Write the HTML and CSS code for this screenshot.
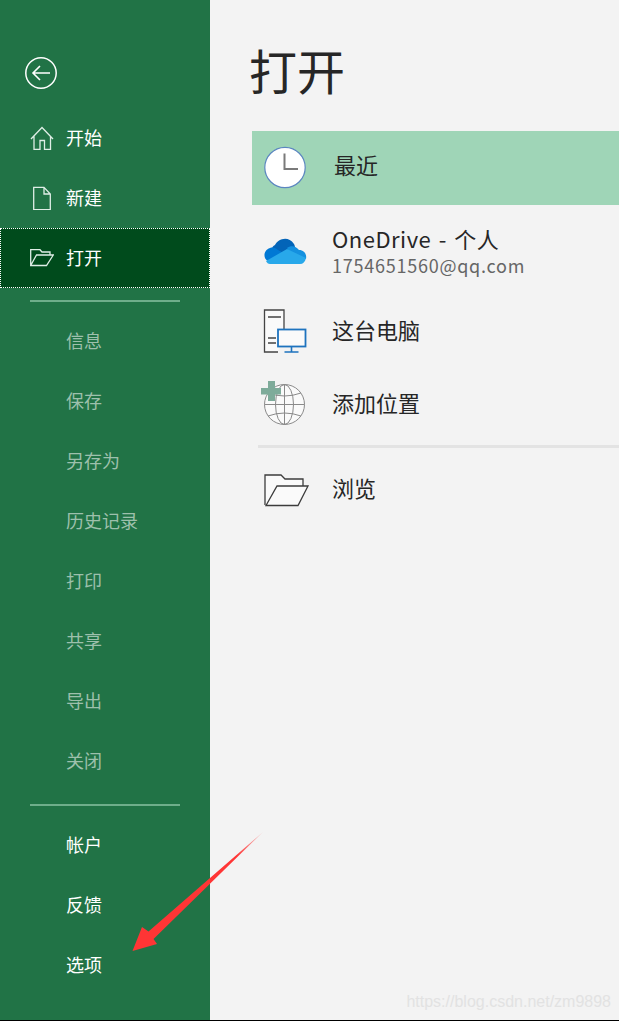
FILE: index.html
```html
<!DOCTYPE html>
<html lang="zh-CN">
<head>
  <meta charset="UTF-8">
  <title>打开</title>
  <link rel="stylesheet" href="styles.css">
</head>
<body>
  <div class="app">
    <nav class="sidebar">
      <div class="back">
        <svg width="34" height="34" viewBox="0 0 34 34" fill="none" stroke="#fff">
          <circle cx="16" cy="16" r="15.2" stroke-width="1.5"/>
          <path d="M8 16H25M15 9L8 16L15 23" stroke-width="1.6"/>
        </svg>
      </div>
      <a class="nav-item">
        <svg class="nav-icon" width="24" height="24" viewBox="0 0 24 24" fill="none" stroke="#dfeee6" stroke-width="1.3">
          <path d="M1 13L12 1.5L23 13M4 10V23.5H10V14.5H14.5V23.5H20.5V10"/>
        </svg>
        开始
      </a>
      <a class="nav-item">
        <svg class="nav-icon" width="24" height="24" viewBox="0 0 24 24" fill="none" stroke="#dfeee6" stroke-width="1.3">
          <path d="M3.7 1.3H14L20.3 8V23.7H3.7ZM14 1.3V8H20.3"/>
        </svg>
        新建
      </a>
      <a class="nav-item active">
        <svg class="nav-icon" width="24" height="24" viewBox="0 0 24 24" fill="none" stroke="#dfeee6" stroke-width="1.3">
          <path d="M0.7 19.5V3.7H10L12 6H20V9M0.7 19.5H16.5L23.3 9H6.5L0.7 19.5Z"/>
        </svg>
        打开
      </a>
      <div class="nav-sep"></div>
      <a class="nav-item dim">信息</a>
      <a class="nav-item dim">保存</a>
      <a class="nav-item dim">另存为</a>
      <a class="nav-item dim">历史记录</a>
      <a class="nav-item dim">打印</a>
      <a class="nav-item dim">共享</a>
      <a class="nav-item dim">导出</a>
      <a class="nav-item dim">关闭</a>
      <div class="nav-sep lower"></div>
      <a class="nav-item">帐户</a>
      <a class="nav-item">反馈</a>
      <a class="nav-item">选项</a>
    </nav>

    <main class="content">
      <h1>打开</h1>
      <div class="place selected">
        <svg class="place-icon" width="44" height="44" viewBox="0 0 44 44">
          <circle cx="22" cy="21.5" r="20.2" fill="#fff" stroke="#5b86c0" stroke-width="1.2"/>
          <path d="M21.5 7.500V23H35" fill="none" stroke="#7a7a7a" stroke-width="2"/>
        </svg>
        <span class="place-name">最近</span>
      </div>
      <div class="place onedrive">
        <svg class="place-icon" width="44" height="44" viewBox="0 0 44 44">
          <path d="M12 17C15 11 25 7 31 16C32 18 32 19 32 21L17 29L9 21C9 19 10 18 12 17Z" fill="#0364b8"/>
          <path d="M5 33C0 31 0 22 7 20C10 19 13 20 15 22L24 27L10 36Z" fill="#0078d4"/>
          <path d="M24 20C28 17 33 18 36 22C41 22 44 26 43 31L30 30Z" fill="#1490df"/>
          <path d="M7 36C5 36 4 35 3 33L24 21L43 30C42 34 40 36 37 36Z" fill="#28a8ea"/>
        </svg>
        <div>
          <div class="place-name drive-name">OneDrive - 个人</div>
          <div class="place-sub">1754651560@qq.com</div>
        </div>
      </div>
      <div class="place computer">
        <svg class="place-icon" width="44" height="44" viewBox="0 0 44 44" fill="none">
          <path d="M15 43H1.500V1H21V20" stroke="#444" stroke-width="1.300" fill="#fafafa"/>
          <path d="M5 8H18M5 29H13M5 34H13" stroke="#444" stroke-width="1.300"/>
          <rect x="15" y="20.500" width="27.500" height="17" fill="#fafafa" stroke="#1e73be" stroke-width="1.800"/>
          <path d="M28.500 37.500V43M21.500 43H35.500" stroke="#1e73be" stroke-width="1.600"/>
        </svg>
        <span class="place-name">这台电脑</span>
      </div>
      <div class="place add">
        <svg class="place-icon globe" width="46" height="47" viewBox="0 0 46 47" fill="none" stroke="#8a8a8a" stroke-width="1">
          <circle cx="24.500" cy="25.500" r="20" fill="#fafafa"/>
          <ellipse cx="24.500" cy="25.500" rx="9" ry="20"/>
          <path d="M24.500 5.500V45.500M4.500 25.500H44.500M8 14Q24.500 20 41 14M8 37Q24.500 31 41 37"/>
          <path d="M8 2H15V9H21V15.500H15V22H8V15.500H1V9H8Z" fill="#7eab9a" stroke="none"/>
        </svg>
        <span class="place-name">添加位置</span>
      </div>
      <div class="place-sep"></div>
      <div class="place browse">
        <svg class="place-icon" width="46" height="34" viewBox="0 0 46 34" fill="none" stroke="#3c3c3c" stroke-width="1.300">
          <path d="M1 31V1H17L21 5H39V12" fill="#fafafa"/>
          <path d="M2 31.500H34L44 12H13L2 31.500Z" fill="#fafafa"/>
        </svg>
        <span class="place-name">浏览</span>
      </div>
    </main>

    <svg class="arrow" width="132" height="120" viewBox="0 0 132 120">
      <defs>
        <linearGradient id="arrow-fade" x1="131" y1="0" x2="0" y2="119" gradientUnits="userSpaceOnUse">
          <stop offset="0" stop-color="#ff3535" stop-opacity="0.2"/>
          <stop offset="0.2" stop-color="#ff3535"/>
        </linearGradient>
      </defs>
      <path d="M0.500 119L10 95L16.500 99.500L131 0L21.500 107L25 112Z" fill="url(#arrow-fade)"/>
    </svg>
    <span class="watermark">https://blog.csdn.net/zm9898</span>
  </div>
</body>
</html>
```

FILE: styles.css
```css
html, body {
  margin: 0;
  padding: 0;
}
body {
  font-family: "Noto Sans CJK SC", "Noto Sans", sans-serif;
  background: #f3f3f3;
}
.app {
  position: relative;
  display: flex;
  height: 1020px;
  border-bottom: 1px solid #000;
  overflow: hidden;
}

/* left green column */
.sidebar {
  width: 210px;
  flex-shrink: 0;
  background: #217346;
  color: #fff;
}
.back {
  height: 108px;
  padding: 57px 0 0 25px;
  box-sizing: border-box;
}
.nav-item {
  display: flex;
  align-items: center;
  box-sizing: border-box;
  height: 60px;
  padding: 0 0 2px 66px;
  position: relative;
  font-size: 18px;
}
.nav-icon {
  position: absolute;
  left: 30px;
  top: 18px;
}
.nav-item.active {
  background: #004b1c;
  outline: 1px dotted #fff;
  outline-offset: -1px;
}
.nav-item.dim {
  color: #9dc0ac;
}
.nav-sep {
  height: 2px;
  background: #6fae8b;
  margin: 12px 30px 9px;
}
.nav-sep.lower {
  margin-top: 13px;
}

/* right panel */
.content {
  flex: 1;
  padding-left: 42px;
  color: #262626;
}
h1 {
  margin: 0 0 0 -3px;
  height: 131px;
  box-sizing: border-box;
  padding-top: 30px;
  font-size: 48px;
  font-weight: 400;
  line-height: 78px;
}
.place {
  display: flex;
  align-items: center;
  box-sizing: border-box;
  height: 74px;
  position: relative;
  padding: 0 0 4px 80px;
}
.place-icon {
  position: absolute;
  left: 11px;
  top: 15px;
}
.place.selected {
  background: #9fd5b7;
  padding: 0 0 8px 82px;
}
.place.onedrive {
  margin-top: 9px;
  padding-bottom: 3px;
}
.place.onedrive .place-icon {
  top: 14px;
}
.place.computer {
  margin-top: 6px;
}
.place.add {
  margin-top: -1px;
}
.globe {
  left: 8px;
  top: 12px;
}
.place.browse .place-icon {
  left: 12px;
  top: 22px;
}
.place-name {
  font-size: 22px;
  line-height: 30px;
}
.drive-name {
  letter-spacing: 0.5px;
  word-spacing: 2px;
}
.place-sub {
  font-size: 18px;
  line-height: 24px;
  letter-spacing: 0.75px;
  color: #666;
}
.place-sep {
  height: 3px;
  background: #e3e3e3;
  margin: 4px 0 4px 6px;
}

/* annotation painted on top of the screenshot */
.arrow {
  position: absolute;
  left: 132px;
  top: 832px;
}
.watermark {
  position: absolute;
  right: 8px;
  top: 993px;
  font-family: "Liberation Sans", sans-serif;
  font-size: 16px;
  color: #e2e2e2;
}
```
